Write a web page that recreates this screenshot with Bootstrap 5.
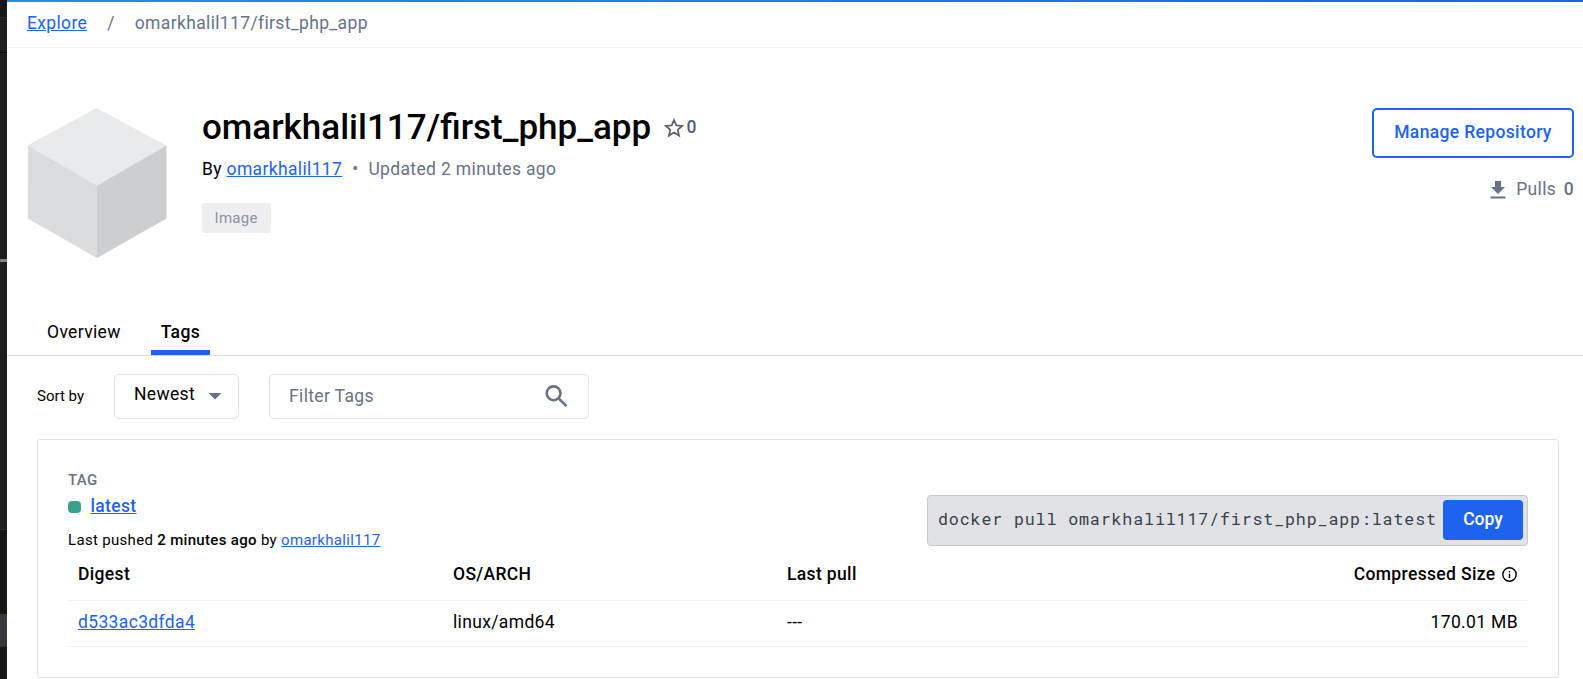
<!DOCTYPE html>
<html lang="en">
<head>
<meta charset="utf-8">
<meta name="viewport" content="width=device-width, initial-scale=1">
<title>omarkhalil117/first_php_app Tags</title>
<link href="https://cdn.jsdelivr.net/npm/bootstrap@5.3.0/dist/css/bootstrap.min.css" rel="stylesheet">
<style>
  html, body { height: 100%; overflow: hidden; }
  body { font-family: Roboto, "Liberation Sans", sans-serif; font-size: 17.5px; line-height: 25px; letter-spacing: .35px; color: #000; background: #fff; }
  a { color: #1d63ed; text-decoration: underline; }
  .fw-medium { font-weight: 500 !important; }
  .muted { color: #677285; }
  .editor-edge { width: 7px; background: linear-gradient(#181818 0 17px, #2b2b2b 17px 18px, #1f1f1f 18px 52px, #0c0c0c 52px 53px, #1f1f1f 53px 259px, #828282 259px 262px, #1f1f1f 262px 529px, #2b2b2b 529px 530px, #181818 530px 614px, #37373d 614px 647px, #181818 647px); }
  .top-line { height: 2px; background: linear-gradient(90deg, #1d90f0, #1d63ed); }
  .crumbs { height: 46px; padding: 9px 20px 0; border-bottom: 1px solid #f0f1f2; }
  .crumbs .breadcrumb-item + .breadcrumb-item { padding-left: 20px; }
  .crumbs .breadcrumb-item + .breadcrumb-item::before { padding-right: 20px; color: #677285; }
  .repo-head { height: 258px; padding: 60px 9px 0 20px; }
  .repo-info { padding-left: 35px; }
  .repo-title { font-size: 35px; line-height: 40px; letter-spacing: 0; font-weight: 500; }
  .star { margin-left: 13px; }
  .star-count { color: #556072; margin: -2px 0 0 2.5px; }
  .by-line { margin: 9px 0 21px; }
  .bullet { width: 26.2px; text-align: center; }
  .kind { font-size: 15px; line-height: 30px; padding: 0 13px 0 12.5px; background: #eeeef0; color: #8993a5; border-radius: 3px; font-weight: 400; letter-spacing: .3px; }
  .btn-manage { width: 202px; height: 50px; border: 2px solid #1d63ed; border-radius: 5px; color: #1d63ed; font-size: 17.5px; font-weight: 500; letter-spacing: .35px; padding: 0 0 2px; line-height: 44px; }
  .pulls { margin-top: 19px; gap: 7.5px; }
  .pulls svg { margin: 4px 2.5px 0 0; }
  .repo-tabs { height: 50px; border-bottom: 1px solid #dcdde0; padding-left: 30px; gap: 20px; }
  .repo-tabs .nav-link { color: #000; border-radius: 0; height: 49px; padding: 14px 10px 0; line-height: 25px; }
  .repo-tabs .active { border-bottom: 5px solid #1d63ed; font-weight: 500; }
  .text15 { font-size: 15px; line-height: 20px; letter-spacing: .32px; }
  .tools { padding: 18px 0 0 30px; }
  .sort-label { width: 47px; letter-spacing: 0; white-space: nowrap; margin-top: -2px; }
  .control-box { height: 45px; border: 1px solid #e1e2e6; border-radius: 5px; }
  .sort-box { width: 125px; margin-left: 30px; padding: 0 16px 0 19px; }
  .filter-box { width: 320px; margin-left: 30px; padding: 0 20px 0 19px; }
  .newest { margin-top: -4px; }
  .filter-text { margin-top: -1px; }
  .tag-card { margin: 20px 24px 0 30px; height: 239px; border: 1px solid #e1e2e6; border-radius: 3px; padding: 29px 30px 0; }
  .tag-top { height: 83px; }
  .tag-label { margin-top: 1px; }
  .tag-name { margin-top: 4px; gap: 9.5px; }
  .pushed { margin-top: 11px; }
  .dot { width: 13px; height: 12px; border-radius: 4px; background: #3ba08d; }
  .pull-box { width: 601px; height: 51px; margin-top: 26px; border: 1px solid #c4c8d1; border-radius: 4px; background: #e1e2e6; padding: 0 4px 1px 10px; }
  .pull-box code { font-family: "Roboto Mono", "DejaVu Sans Mono", monospace; font-size: 16.7px; letter-spacing: .83px; color: #393f49; line-height: 25px; white-space: nowrap; margin-top: -2px; }
  .btn-copy { width: 80px; height: 40px; padding: 0 0 2px; border: 0; border-radius: 4px; background: #1d63ed; color: #fff; font-size: 17.5px; font-weight: 500; line-height: 38px; }
  .tag-table { table-layout: fixed; --bs-table-color: #000; }
  .tag-table > :not(caption) > * > * { padding: 0 10px; border-bottom: 1px solid #f0f1f3; line-height: 25px; vertical-align: top; }
  .tag-table th { height: 48px; font-weight: 500; padding-top: 10px !important; }
  .tag-table td { height: 46px; padding-top: 9px !important; }
  .size-head { gap: 6.5px; margin-right: 1px; }
  svg { display: block; flex: none; }
</style>
</head>
<body class="d-flex">
<div class="editor-edge flex-shrink-0"></div>
<main class="flex-grow-1">
  <div class="top-line"></div>
  <nav class="crumbs" aria-label="breadcrumb">
    <ol class="breadcrumb m-0">
      <li class="breadcrumb-item"><a href="#">Explore</a></li>
      <li class="breadcrumb-item muted">omarkhalil117/first_php_app</li>
    </ol>
  </nav>

  <header class="repo-head d-flex">
    <svg width="140" height="151" viewBox="0 0 140 151">
      <path fill="#e8eaeb" d="M69.5 0 139.5 37.5 70 77.5.5 37.500Z"/>
      <path fill="#dbdcde" d="M.8 37.500 70 77.500V150L.8 110.500Z"/>
      <path fill="#cbcfd2" d="M139.500 37.500 70 77.500V150L139.500 110.500Z"/>
    </svg>
    <div class="repo-info flex-grow-1">
      <div class="d-flex align-items-center">
        <h1 class="repo-title m-0">omarkhalil117/first_php_app</h1>
        <svg class="star" width="20" height="20" viewBox="0 0 20 20" fill="none" stroke="#556072" stroke-width="1.700"><path d="M10 2 12.300 7.400 18.200 7.900 13.700 11.800 15.100 17.600 10 14.500 4.900 17.600 6.300 11.800 1.800 7.900 7.700 7.400Z"/></svg>
        <span class="star-count fw-medium">0</span>
      </div>
      <div class="by-line d-flex">
        <span>By <a href="#">omarkhalil117</a></span>
        <span class="muted bullet">•</span>
        <span class="muted">Updated 2 minutes ago</span>
      </div>
      <span class="badge kind">Image</span>
    </div>
    <div class="d-flex flex-column align-items-end">
      <button class="btn btn-manage">Manage Repository</button>
      <div class="pulls d-flex muted">
        <svg width="16" height="18" viewBox="0 0 16 18" fill="#677285"><path d="M5 0h6v6h4L8 13 1 6h4zM.5 15.500h15v2H.5z"/></svg>
        <span>Pulls</span><span class="fw-medium">0</span>
      </div>
    </div>
  </header>

  <ul class="nav repo-tabs">
    <li class="nav-item"><a class="nav-link text-decoration-none" href="#">Overview</a></li>
    <li class="nav-item"><a class="nav-link text-decoration-none active" href="#">Tags</a></li>
  </ul>

  <div class="tools d-flex align-items-center">
    <span class="text15 sort-label">Sort by</span>
    <div class="control-box sort-box d-flex align-items-center justify-content-between">
      <span class="newest">Newest</span>
      <svg width="14" height="7" viewBox="0 0 14 7" fill="#677285"><path d="M.5 0h13L7 6.500z"/></svg>
    </div>
    <div class="control-box filter-box d-flex align-items-center justify-content-between">
      <span class="muted filter-text">Filter Tags</span>
      <svg width="23" height="23" viewBox="0 0 23 23" fill="none" stroke="#677285" stroke-width="2.600"><circle cx="8.600" cy="8.300" r="6.900"/><path d="m13.600 13.300 7.900 7.900"/></svg>
    </div>
  </div>

  <section class="tag-card">
    <div class="tag-top d-flex justify-content-between">
      <div>
        <div class="text15 muted fw-medium tag-label">TAG</div>
        <div class="tag-name d-flex align-items-center"><span class="dot"></span><a class="fw-medium" href="#">latest</a></div>
        <div class="text15 pushed">Last pushed <span class="fw-medium">2 minutes ago</span> by <a href="#">omarkhalil117</a></div>
      </div>
      <div class="pull-box d-flex align-items-center justify-content-between">
        <code>docker pull omarkhalil117/first_php_app:latest</code>
        <button class="btn btn-copy">Copy</button>
      </div>
    </div>
    <table class="table tag-table m-0">
      <colgroup><col style="width:375px"><col style="width:334px"><col style="width:375px"><col></colgroup>
      <thead>
        <tr><th>Digest</th><th>OS/ARCH</th><th>Last pull</th>
        <th><div class="size-head d-flex justify-content-end align-items-center">Compressed Size
          <svg width="15" height="15" viewBox="0 0 15 15" fill="none" stroke="#000" stroke-width="1.400"><circle cx="7.500" cy="7.500" r="6.700"/><path d="M7.500 6.700v4.300M7.500 4v1.500"/></svg></div></th></tr>
      </thead>
      <tbody>
        <tr><td><a href="#">d533ac3dfda4</a></td><td>linux/amd64</td><td>---</td><td class="text-end">170.01 MB</td></tr>
      </tbody>
    </table>
  </section>
</main>
<script src="https://cdn.jsdelivr.net/npm/bootstrap@5.3.0/dist/js/bootstrap.bundle.min.js"></script>
</body>
</html>
